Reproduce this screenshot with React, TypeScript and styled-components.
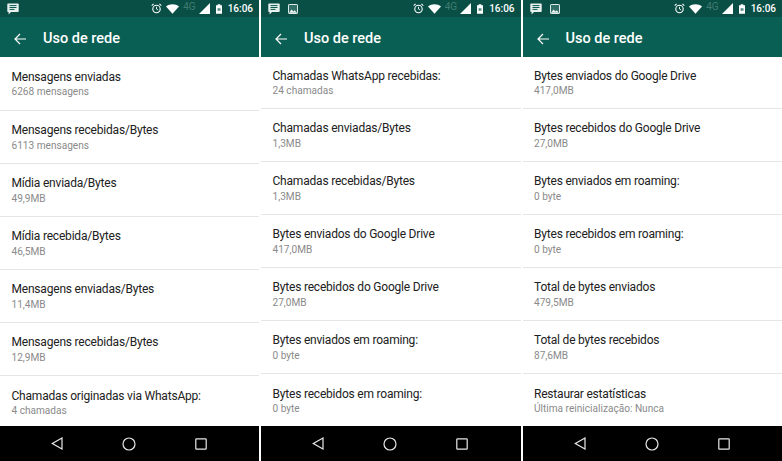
import React from "react"
import styled, { createGlobalStyle } from "styled-components"

const GlobalStyle = createGlobalStyle`
  html, body { margin: 0; padding: 0; background: #fff; }
  body { width: 782px; height: 461px; overflow: hidden; font-family: Roboto, "Liberation Sans", sans-serif; }
`

const Page = styled.div`
  display: grid;
  grid-template-columns: 259px 259.5px 259.5px;
  column-gap: 2px;
  width: 782px;
  height: 461px;
  background: #fff;
`
const Phone = styled.div`
  display: flex;
  flex-direction: column;
  height: 461px;
  overflow: hidden;
  background: #fff;
`
const StatusBar = styled.div`
  display: flex;
  align-items: center;
  height: 17px;
  flex: none;
  padding: 0 6px 0 7px;
  background: #0a4f45;
  color: #fff;
`
const Notifications = styled.div`
  display: flex;
  align-items: center;
  gap: 8px;
  flex: 1;
`
const Indicators = styled.div`
  display: flex;
  align-items: center;
  gap: 4px;
`
const NetLabel = styled.span`
  font-size: 10px;
  line-height: 10px;
  color: #3f7c71;
  margin: 0 -1px 3px 0;
`
const Clock = styled.span`
  font-size: 10px;
  font-weight: 500;
  margin-left: 2px;
`
const AppBar = styled.div`
  display: flex;
  align-items: center;
  gap: 17px;
  height: 40px;
  flex: none;
  padding: 3px 0 0 14px;
  box-sizing: border-box;
  background: #095f53;
  color: #fff;
`
const Title = styled.div`
  font-size: 14.5px;
  font-weight: 500;
`
const List = styled.div`
  flex: 1;
  min-height: 0;
  overflow: hidden;
`
const Row = styled.div<{ $height: number }>`
  display: flex;
  flex-direction: column;
  justify-content: center;
  gap: 0.5px;
  height: ${p => p.$height}px;
  padding: 0.5px 11.5px 0;
  box-sizing: border-box;
  border-bottom: 1px solid #e6e6e6;
  &:last-child { border-bottom: none; }
`
const RowTitle = styled.div`
  font-size: 12px;
  letter-spacing: -0.2px;
  line-height: 15px;
  color: #212121;
`
const RowValue = styled.div`
  font-size: 10.1px;
  line-height: 13px;
  color: #8a8a8a;
`
const NavBar = styled.div`
  display: flex;
  align-items: center;
  justify-content: space-around;
  height: 35px;
  flex: none;
  padding: 0 23px 0 22px;
  background: #000;
`

const Chat = () => (
  <svg width="12" height="12" viewBox="0 0 12 12">
    <path d="M1 0.5h10a.7.7 0 0 1 .7.7v7.1a.7.7 0 0 1-.7.7H4L1.6 11.6V9H1a.7.7 0 0 1-.7-.7V1.2A.7.7 0 0 1 1 .5z" fill="#e8f0ee" />
    <path d="M2.5 2.6h7M2.5 4.5h7M2.5 6.4h5" stroke="#0b5a4f" strokeWidth="1" />
  </svg>
)
const Picture = () => (
  <svg width="10" height="10" viewBox="0 0 10 10">
    <rect x="0.5" y="0.5" width="9" height="9" rx="0.6" fill="#2f6f65" stroke="#dfe9e7" strokeWidth="1" />
    <path d="M1 8.8 3.6 5.6 5.4 7.4 6.6 6.2 9 8.8z" fill="#eef4f3" />
  </svg>
)
const Alarm = () => (
  <svg width="11" height="11" viewBox="0 0 11 11" fill="none" stroke="#fff">
    <circle cx="5.5" cy="6" r="3.7" strokeWidth="1.1" />
    <path d="M5.5 3.8V6l1.6 1" strokeWidth="0.9" />
    <path d="M0.7 2.6 2.6 0.9M10.3 2.6 8.4 0.9" strokeWidth="1.1" />
  </svg>
)
const Wifi = () => (
  <svg width="13" height="10" viewBox="0 0 14 10">
    <path d="M0 2.4C3.8-.8 10.2-.8 14 2.4L7 10z" fill="#fff" />
  </svg>
)
const Signal = () => (
  <svg width="13" height="11" viewBox="0 0 13 11">
    <path d="M0 11 11 0v11z" fill="#fff" />
  </svg>
)
const Battery = () => (
  <svg width="6" height="10" viewBox="0 0 7 11">
    <path d="M2 0h3v1h2v10H0V1h2z" fill="#fff" />
    <path d="M2 4.5h1.2v3H2zM3.9 4.5h1.2v3H3.9z" fill="#0a5a4f" />
  </svg>
)
const Back = () => (
  <svg width="12" height="12" viewBox="0 0 12 12" fill="none" stroke="#fff" strokeWidth="1.2">
    <path d="M12 6H1M6 1 1 6l5 5" />
  </svg>
)
const NavBack = () => (
  <svg width="12" height="13" viewBox="0 0 12 13" fill="none" stroke="#e8e8e8" strokeWidth="1.2">
    <path d="M11 1 1.3 6.5 11 12z" />
  </svg>
)
const NavHome = () => (
  <svg width="14" height="14" viewBox="0 0 14 14" fill="none" stroke="#e8e8e8" strokeWidth="1.2">
    <circle cx="7" cy="7" r="6" />
  </svg>
)
const NavRecent = () => (
  <svg width="12" height="12" viewBox="0 0 12 12" fill="none" stroke="#e8e8e8" strokeWidth="1.2">
    <rect x="0.8" y="0.8" width="10.4" height="10.4" rx="0.8" />
  </svg>
)

type Item = [string, string]

const PHONES: { lead: number; picture: boolean; items: Item[] }[] = [
  {
    lead: 54,
    picture: false,
    items: [
      ["Mensagens enviadas", "6268 mensagens"],
      ["Mensagens recebidas/Bytes", "6113 mensagens"],
      ["Mídia enviada/Bytes", "49,9MB"],
      ["Mídia recebida/Bytes", "46,5MB"],
      ["Mensagens enviadas/Bytes", "11,4MB"],
      ["Mensagens recebidas/Bytes", "12,9MB"],
      ["Chamadas originadas via WhatsApp:", "4 chamadas"],
    ],
  },
  {
    lead: 52,
    picture: true,
    items: [
      ["Chamadas WhatsApp recebidas:", "24 chamadas"],
      ["Chamadas enviadas/Bytes", "1,3MB"],
      ["Chamadas recebidas/Bytes", "1,3MB"],
      ["Bytes enviados do Google Drive", "417,0MB"],
      ["Bytes recebidos do Google Drive", "27,0MB"],
      ["Bytes enviados em roaming:", "0 byte"],
      ["Bytes recebidos em roaming:", "0 byte"],
    ],
  },
  {
    lead: 52,
    picture: true,
    items: [
      ["Bytes enviados do Google Drive", "417,0MB"],
      ["Bytes recebidos do Google Drive", "27,0MB"],
      ["Bytes enviados em roaming:", "0 byte"],
      ["Bytes recebidos em roaming:", "0 byte"],
      ["Total de bytes enviados", "479,5MB"],
      ["Total de bytes recebidos", "87,6MB"],
      ["Restaurar estatísticas", "Última reinicialização: Nunca"],
    ],
  },
]

export default function App() {
  return (
    <Page>
      <GlobalStyle />
      {PHONES.map((phone, i) => (
        <Phone key={i}>
          <StatusBar>
            <Notifications>
              <Chat />
              {phone.picture && <Picture />}
            </Notifications>
            <Indicators>
              <Alarm />
              <Wifi />
              <NetLabel>4G</NetLabel>
              <Signal />
              <Battery />
              <Clock>16:06</Clock>
            </Indicators>
          </StatusBar>
          <AppBar>
            <Back />
            <Title>Uso de rede</Title>
          </AppBar>
          <List>
            {phone.items.map(([title, value], j) => (
              <Row key={j} $height={j === 0 ? phone.lead : 53}>
                <RowTitle>{title}</RowTitle>
                <RowValue>{value}</RowValue>
              </Row>
            ))}
          </List>
          <NavBar>
            <NavBack />
            <NavHome />
            <NavRecent />
          </NavBar>
        </Phone>
      ))}
    </Page>
  )
}
